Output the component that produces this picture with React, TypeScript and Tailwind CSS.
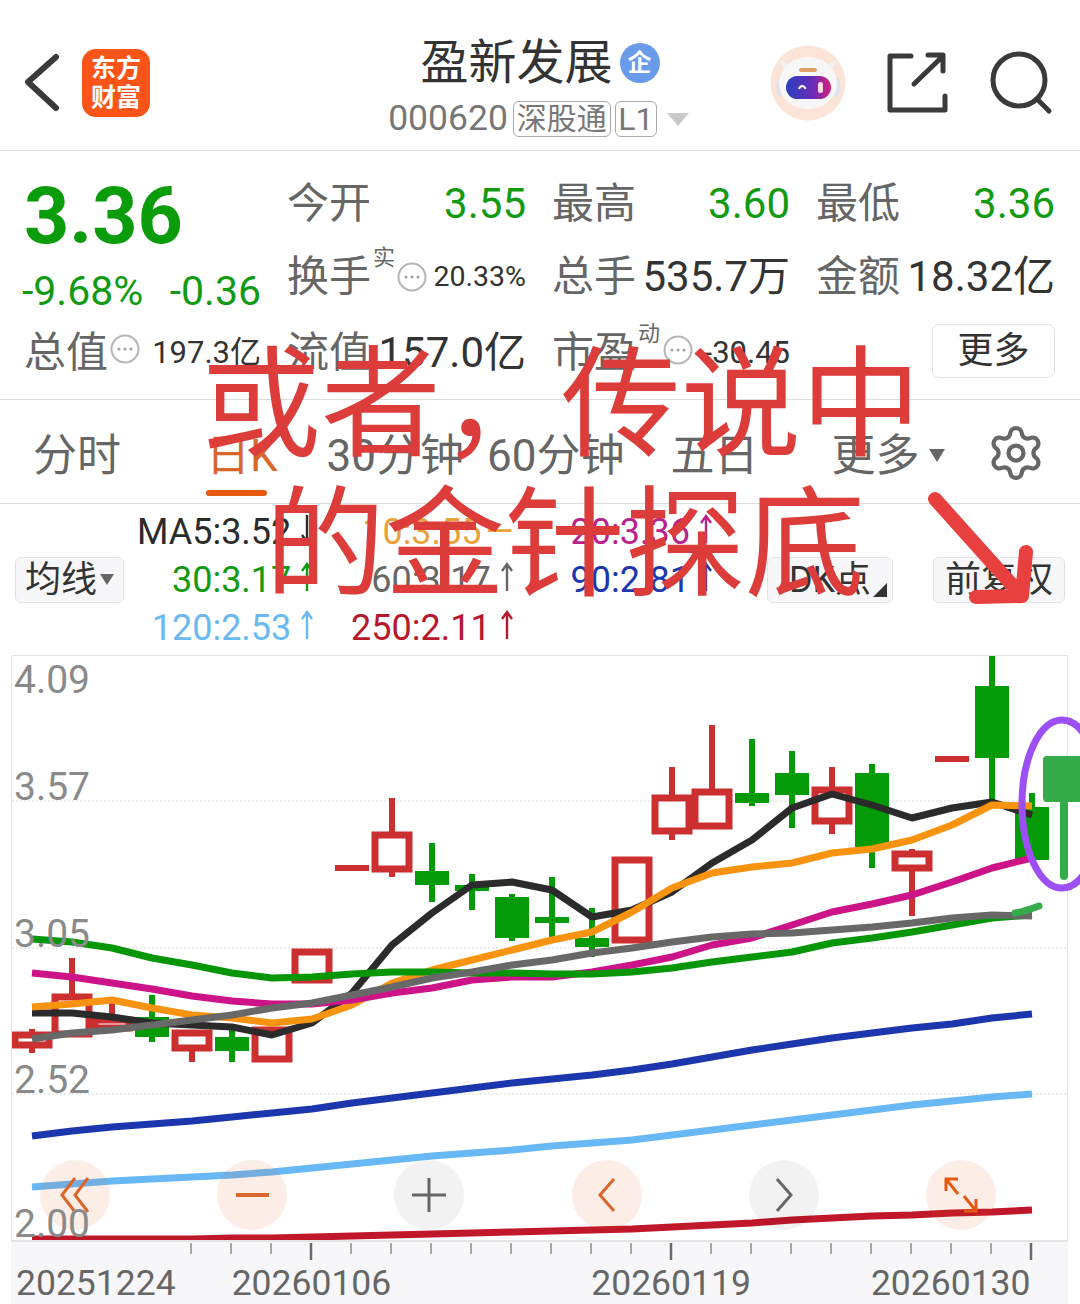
import { Settings } from "lucide-react";

type Candle = { top: number; bottom: number; high: number; low: number; red: boolean };

// one entry per trading day, x = 31 + 40 * index
const candles: Candle[] = [
  { top: 1035, bottom: 1045, high: 1029, low: 1053, red: true },
  { top: 997, bottom: 1034, high: 958, low: 1034, red: true },
  { top: 1020, bottom: 1028, high: 998, low: 1028, red: true },
  { top: 1017, bottom: 1037, high: 995, low: 1042, red: false },
  { top: 1033, bottom: 1048, high: 1030, low: 1062, red: true },
  { top: 1037, bottom: 1051, high: 1030, low: 1062, red: false },
  { top: 1030, bottom: 1059, high: 1027, low: 1059, red: true },
  { top: 952, bottom: 980, high: 952, low: 980, red: true },
  { top: 865, bottom: 871, high: 865, low: 871, red: true },
  { top: 835, bottom: 869, high: 798, low: 877, red: true },
  { top: 871, bottom: 885, high: 843, low: 902, red: false },
  { top: 885, bottom: 890, high: 874, low: 910, red: false },
  { top: 897, bottom: 938, high: 894, low: 941, red: false },
  { top: 917, bottom: 922, high: 877, low: 937, red: false },
  { top: 938, bottom: 947, high: 908, low: 957, red: false },
  { top: 860, bottom: 940, high: 860, low: 940, red: true },
  { top: 798, bottom: 831, high: 767, low: 840, red: true },
  { top: 792, bottom: 826, high: 725, low: 826, red: true },
  { top: 793, bottom: 803, high: 739, low: 806, red: false },
  { top: 773, bottom: 795, high: 751, low: 828, red: false },
  { top: 790, bottom: 821, high: 767, low: 834, red: true },
  { top: 773, bottom: 847, high: 764, low: 868, red: false },
  { top: 854, bottom: 868, high: 849, low: 916, red: true },
  { top: 756, bottom: 762, high: 756, low: 762, red: true },
  { top: 686, bottom: 758, high: 655, low: 800, red: false },
  { top: 807, bottom: 860, high: 793, low: 860, red: false },
];

const toPoints = (ys: number[]) => ys.map((y, i) => `${31 + 40 * i},${y}`).join(" ");

const maLines = [
  {
    color: "#2b2b2b",
    ys: [1013, 1013, 1017, 1023, 1025, 1027, 1035, 1023, 993, 945, 913, 885, 882, 890, 917, 910, 892, 863, 840, 808, 794, 805, 818, 808, 802, 815],
  },
  {
    color: "#f7930f",
    ys: [1007, 1004, 1000, 1008, 1015, 1018, 1023, 1019, 1005, 983, 970, 960, 950, 940, 932, 912, 888, 873, 867, 863, 853, 849, 840, 825, 805, 806],
  },
  {
    color: "#cc1488",
    ys: [973, 977, 983, 989, 996, 1001, 1004, 1004, 1000, 993, 988, 980, 977, 977, 972, 965, 957, 945, 938, 925, 912, 904, 895, 882, 868, 858],
  },
  {
    color: "#079607",
    ys: [939, 942, 948, 958, 965, 973, 978, 977, 974, 972, 972, 973, 973, 974, 974, 972, 968, 962, 957, 952, 943, 938, 932, 925, 918, 915],
  },
  {
    color: "#686868",
    ys: [1039, 1033, 1030, 1025, 1020, 1015, 1008, 1003, 995, 987, 978, 972, 965, 960, 953, 948, 942, 937, 934, 933, 930, 927, 923, 918, 915, 916],
  },
  {
    color: "#1c36ad",
    ys: [1136, 1131, 1127, 1124, 1121, 1117, 1113, 1109, 1103, 1098, 1093, 1088, 1083, 1079, 1075, 1070, 1064, 1057, 1050, 1044, 1038, 1033, 1028, 1024, 1018, 1014],
  },
  {
    color: "#68b8f5",
    ys: [1187, 1184, 1181, 1179, 1177, 1175, 1172, 1168, 1164, 1160, 1156, 1153, 1150, 1146, 1143, 1140, 1135, 1130, 1125, 1120, 1115, 1110, 1105, 1101, 1097, 1094],
  },
  {
    color: "#c0182a",
    ys: [1239, 1239, 1239, 1239, 1239, 1238, 1238, 1237, 1236, 1235, 1234, 1233, 1232, 1231, 1230, 1229, 1227, 1225, 1223, 1220, 1218, 1216, 1215, 1213, 1212, 1210],
  },
];

function Dots() {
  return (
    <svg width="30" height="30" viewBox="0 0 30 30" className="shrink-0">
      <circle cx="15" cy="15" r="13.5" fill="none" stroke="#b5b5b5" strokeWidth="2" />
      <circle cx="9" cy="15" r="1.6" fill="#a5a5a5" />
      <circle cx="15" cy="15" r="1.6" fill="#a5a5a5" />
      <circle cx="21" cy="15" r="1.6" fill="#a5a5a5" />
    </svg>
  );
}

function Arrow({ color, down }: { color: string; down?: boolean }) {
  return (
    <svg width="14" height="30" viewBox="0 0 14 30" className="ml-[9px] shrink-0">
      <path d={down ? "M7 1v27M2 21l5 7 5-7" : "M7 29V2M2 9l5-7 5 7"} fill="none" stroke={color} strokeWidth="2.4" />
    </svg>
  );
}

function Robot() {
  return (
    <svg width="76" height="76" viewBox="0 0 76 76" className="shrink-0">
      <defs>
        <linearGradient id="visor" x1="0" x2="1" y1="0" y2="0">
          <stop offset="0" stopColor="#2a3fc0" />
          <stop offset="0.6" stopColor="#6a2bb8" />
          <stop offset="1" stopColor="#d8207a" />
        </linearGradient>
      </defs>
      <circle cx="38" cy="38" r="37.5" fill="#fde4d8" />
      <path d="M12 16c2 6 5 8 10 10M64 16c-2 6-5 8-10 10" stroke="#f3f1f1" strokeWidth="5" fill="none" />
      <ellipse cx="11" cy="42" rx="5" ry="10" fill="#e2e2e8" />
      <ellipse cx="66" cy="42" rx="5" ry="10" fill="#e2e2e8" />
      <ellipse cx="38" cy="38" rx="29" ry="26" fill="#f8f7f8" />
      <rect x="29" y="23" width="18" height="4" rx="2" fill="#e0a066" />
      <rect x="16" y="31" width="45" height="23" rx="11.5" fill="url(#visor)" />
      <path d="M29 44c1.500-4 5-4 6.500 0" stroke="#ffffff" strokeWidth="2" fill="none" />
      <rect x="48" y="37" width="5" height="11" rx="2.500" fill="#fbdce6" />
    </svg>
  );
}

function Chart() {
  return (
    <svg width="1055" height="584" viewBox="11 656 1055 584" className="block">
      {[801, 948, 1094].map((y) => (
        <line key={y} x1="11" x2="1067" y1={y} y2={y} stroke="#d8d8d8" strokeWidth="1" strokeDasharray="2 2" />
      ))}
      {candles.map((c, i) => {
        const x = 31 + 40 * i;
        const color = c.red ? "#cc2f2f" : "#049a08";
        const flat = c.bottom - c.top <= 6;
        return (
          <g key={i}>
            <line x1={x} x2={x} y1={c.high} y2={c.low} stroke={color} strokeWidth="6" />
            {flat ? (
              <rect x={x - 17} y={c.top} width="34" height="6" fill={color} />
            ) : c.red ? (
              <rect x={x - 17} y={c.top} width="34" height={c.bottom - c.top} fill="#ffffff" stroke={color} strokeWidth="7" />
            ) : (
              <rect x={x - 17} y={c.top} width="34" height={c.bottom - c.top} fill={color} />
            )}
          </g>
        );
      })}
      {maLines.map((l) => (
        <polyline key={l.color} points={toPoints(l.ys)} fill="none" stroke={l.color} strokeWidth="7" strokeLinejoin="bevel" />
      ))}
    </svg>
  );
}

function AxisTicks() {
  const minor = [191, 231, 271, 351, 391, 431, 471, 511, 551, 591, 631, 711, 751, 791, 831, 871, 911, 951, 991];
  return (
    <svg width="1055" height="24" viewBox="11 1240 1055 24" className="block">
      {minor.map((x) => (
        <line key={x} x1={x} x2={x} y1="1241" y2="1252" stroke="#8d8d8d" strokeWidth="1.500" />
      ))}
      {[311, 671, 1031].map((x) => (
        <line key={x} x1={x} x2={x} y1="1241" y2="1258" stroke="#6a6a6a" strokeWidth="2.500" />
      ))}
    </svg>
  );
}

export default function App() {
  return (
    <div className="relative h-[1304px] w-[1080px] overflow-hidden bg-white font-[Roboto,'Noto_Sans_CJK_SC',sans-serif]">
      {/* top bar */}
      <div className="flex h-[151px] items-center border-b-[1.5px] border-[#dcdcdc]">
        <div className="flex w-[320px] items-center pt-[16px]">
          <svg width="40" height="60" viewBox="0 0 40 60" className="ml-[22px]">
            <path d="M34 4 6 29l28 26" fill="none" stroke="#3a3a3a" strokeWidth="6" strokeLinecap="round" strokeLinejoin="round" />
          </svg>
          <div className="ml-[20px] flex h-[68px] w-[68px] flex-col items-center justify-center rounded-[14px] bg-[#fb5418] text-[25px] leading-[29px] font-bold text-white">
            <span>东方</span>
            <span>财富</span>
          </div>
        </div>
        <div className="flex w-[440px] flex-col items-center pt-[20px]">
          <div className="flex h-[62px] items-center gap-[7px]">
            <span className="text-[48px] leading-none text-[#333]">盈新发展</span>
            <span className="flex h-[40px] w-[40px] items-center justify-center rounded-full bg-[#6a9be8] text-[24px] leading-none font-bold text-white">企</span>
          </div>
          <div className="mt-[5px] -ml-[2px] flex h-[40px] items-center">
            <span className="text-[35.5px] leading-none text-[#777]">000620</span>
            <span className="ml-[5px] flex h-[36px] w-[98px] items-center justify-center rounded-[6px] border-[1.5px] border-[#aaa] text-[30px] leading-none text-[#777]">深股通</span>
            <span className="ml-[4px] flex h-[36px] w-[42px] items-center justify-center rounded-[6px] border-[1.5px] border-[#aaa] text-[32px] leading-none text-[#777]">L1</span>
            <svg width="24" height="14" viewBox="0 0 24 14" className="ml-[9px]">
              <path d="M1 1h22L12 14z" fill="#c9c9c9" />
            </svg>
          </div>
        </div>
        <div className="flex w-[320px] items-center pt-[16px] pl-[10px]">
          <Robot />
          <svg width="64" height="64" viewBox="0 0 64 64" className="ml-[39px]">
            <path d="M26 5H5v54h55V45M29 33 58 5M43 4h15v16" fill="none" stroke="#3a3a3a" strokeWidth="5" strokeLinejoin="round" strokeLinecap="round" />
          </svg>
          <svg width="68" height="68" viewBox="0 0 68 68" className="ml-[38px]">
            <circle cx="32" cy="31" r="26" fill="none" stroke="#3a3a3a" strokeWidth="5" />
            <path d="M50 50l12 12" fill="none" stroke="#3a3a3a" strokeWidth="5" strokeLinecap="round" />
          </svg>
        </div>
      </div>

      {/* quote block */}
      <div className="grid h-[249px] grid-cols-[237px_239px_238px_239px] grid-rows-[77px_70px_81px] gap-x-[26px] border-b-[1.5px] border-[#dcdcdc] pt-[14px] pl-[24px] text-[42px] leading-none text-[#666]">
        <div className="flex items-center pt-[26px] text-[79px] font-bold text-[#0a9c0a]">3.36</div>
        <div className="flex items-center justify-between">
          <span>今开</span>
          <span className="text-[#129a12]">3.55</span>
        </div>
        <div className="flex items-center justify-between">
          <span>最高</span>
          <span className="text-[#129a12]">3.60</span>
        </div>
        <div className="flex items-center justify-between">
          <span>最低</span>
          <span className="text-[#129a12]">3.36</span>
        </div>

        <div className="-ml-[2px] flex items-center justify-between pt-[28px] text-[41px] text-[#129a12]">
          <span>-9.68%</span>
          <span>-0.36</span>
        </div>
        <div className="flex items-center">
          <span>换手</span>
          <span className="-mt-[38px] ml-[2px] text-[22px]">实</span>
          <span className="ml-[2px]"><Dots /></span>
          <span className="ml-auto text-[28.500px] text-[#333]">20.33%</span>
        </div>
        <div className="flex items-center justify-between">
          <span>总手</span>
          <span className="text-[#333]">535.7万</span>
        </div>
        <div className="flex items-center justify-between">
          <span>金额</span>
          <span className="text-[#333]">18.32亿</span>
        </div>

        <div className="flex items-center">
          <span>总值</span>
          <span className="-mt-[8px] ml-[2px]"><Dots /></span>
          <span className="ml-auto text-[31px] text-[#333]">197.3亿</span>
        </div>
        <div className="flex items-center justify-between">
          <span>流值</span>
          <span className="text-[#333]">157.0亿</span>
        </div>
        <div className="flex items-center">
          <span>市盈</span>
          <span className="-mt-[38px] ml-[2px] text-[22px]">动</span>
          <span className="-mt-[6px] ml-[3px]"><Dots /></span>
          <span className="ml-auto text-[31px] text-[#333]">-30.45</span>
        </div>
        <div className="flex items-center justify-end">
          <span className="-mt-[4px] flex h-[54px] w-[123px] items-center justify-center rounded-[7px] border-[1.5px] border-[#e2e2e2] text-[36px] text-[#333]">更多</span>
        </div>
      </div>

      {/* period tabs */}
      <div className="flex h-[104px] items-center border-b-[1.5px] border-[#dcdcdc] pt-[8px] text-[44px] leading-none text-[#666]">
        <span className="ml-[33px]">分时</span>
        <span className="relative ml-[85px] text-[#d9662b]">
          日K
          <span className="absolute top-[56px] left-0 h-[6px] w-[61px] rounded-full bg-[#e55a10]" />
        </span>
        <span className="ml-[49px]">30分钟</span>
        <span className="ml-[23px]">60分钟</span>
        <span className="ml-[46px]">五日</span>
        <span className="ml-[73px]">更多</span>
        <svg width="16" height="13" viewBox="0 0 16 13" className="ml-[9px]">
          <path d="M0 0h16L8 13z" fill="#666" />
        </svg>
        <Settings size={60} strokeWidth={1.700} className="-mt-[6px] ml-[41px] text-[#666]" />
      </div>

      {/* moving average legend */}
      <div className="relative flex h-[151px] items-center text-[36px] leading-none">
        <div className="ml-[15px] flex h-[46px] w-[109px] items-center justify-center rounded-[6px] border-[1.5px] border-[#e3e3e6] bg-[#f7f7f9] text-[36px] text-[#333]">
          均线
          <svg width="14" height="11" viewBox="0 0 14 11" className="ml-[3px]">
            <path d="M0 0h14L7 11z" fill="#666" />
          </svg>
        </div>
        <div className="ml-[-9px] grid w-[598px] grid-cols-3 gap-y-[12px]">
          <div className="flex justify-end text-[#2b2b2b]">MA5:3.52<Arrow color="#2b2b2b" down /></div>
          <div className="flex justify-end text-[#e9a23b]">10:3.55<span className="ml-[4px]">—</span></div>
          <div className="flex justify-end text-[#b9228c]">20:3.36<Arrow color="#b9228c" /></div>
          <div className="flex justify-end text-[#129a12]">30:3.17<Arrow color="#129a12" /></div>
          <div className="flex justify-end text-[#666]">60:3.17<Arrow color="#666" /></div>
          <div className="flex justify-end text-[#1c36ad]">90:2.81<Arrow color="#1c36ad" /></div>
          <div className="flex justify-end text-[#6bb9f0]">120:2.53<Arrow color="#6bb9f0" /></div>
          <div className="flex justify-end text-[#b8182b]">250:2.11<Arrow color="#b8182b" /></div>
        </div>
        <div className="relative ml-[54px] flex h-[46px] w-[126px] items-center justify-center rounded-[6px] border-[1.5px] border-[#e3e3e6] bg-[#f7f7f9] text-[36px] text-[#333]">
          DK点
          <svg width="14" height="14" viewBox="0 0 14 14" className="absolute right-[5px] bottom-[5px]">
            <path d="M14 0v14H0z" fill="#333" />
          </svg>
        </div>
        <div className="ml-[40px] flex h-[46px] w-[132px] items-center justify-center rounded-[6px] border-[1.5px] border-[#e3e3e6] bg-[#f7f7f9] text-[36px] text-[#333]">前复权</div>
      </div>

      {/* candlestick chart */}
      <div className="relative ml-[11px] h-[585px] w-[1057px] border-x-[1.5px] border-t-[1.5px] border-[#e4e4e4]">
        <Chart />
        <div className="absolute top-[504px] left-[28px] flex w-[956px] justify-between">
          <span className="flex h-[70px] w-[70px] items-center justify-center rounded-full bg-[#e55a10]/10">
            <svg width="30" height="36" viewBox="0 0 30 36">
              <path d="M15 1 2 18l13 17M28 1 15 18l13 17" fill="none" stroke="#d9662b" strokeWidth="3" />
            </svg>
          </span>
          <span className="flex h-[70px] w-[70px] items-center justify-center rounded-full bg-[#e55a10]/10">
            <span className="h-[4px] w-[33px] bg-[#d9662b]" />
          </span>
          <span className="flex h-[70px] w-[70px] items-center justify-center rounded-full bg-black/5">
            <svg width="36" height="36" viewBox="0 0 36 36">
              <path d="M18 1v34M1 18h34" fill="none" stroke="#666" strokeWidth="3" />
            </svg>
          </span>
          <span className="flex h-[70px] w-[70px] items-center justify-center rounded-full bg-[#e55a10]/10">
            <svg width="18" height="34" viewBox="0 0 18 34">
              <path d="M16 1 2 17l14 16" fill="none" stroke="#d9662b" strokeWidth="3" />
            </svg>
          </span>
          <span className="flex h-[70px] w-[70px] items-center justify-center rounded-full bg-black/5">
            <svg width="18" height="34" viewBox="0 0 18 34">
              <path d="M2 1l14 16L2 33" fill="none" stroke="#666" strokeWidth="3" />
            </svg>
          </span>
          <span className="flex h-[70px] w-[70px] items-center justify-center rounded-full bg-[#e55a10]/10">
            <svg width="36" height="36" viewBox="0 0 36 36">
              <path d="M3 14V2h12M3 2l12 15M33 22v12H21M33 34 21 19" fill="none" stroke="#e55a10" strokeWidth="3" />
            </svg>
          </span>
        </div>
        <span className="absolute top-[2px] left-[2px] text-[39px] leading-[44px] text-[#8a8a8a]">4.09</span>
        <span className="absolute top-[109px] left-[2px] text-[39px] leading-[44px] text-[#8a8a8a]">3.57</span>
        <span className="absolute top-[256px] left-[2px] text-[39px] leading-[44px] text-[#8a8a8a]">3.05</span>
        <span className="absolute top-[402px] left-[2px] text-[39px] leading-[44px] text-[#8a8a8a]">2.52</span>
        <span className="absolute top-[546px] left-[2px] text-[39px] leading-[44px] text-[#8a8a8a]">2.00</span>
      </div>

      {/* date axis */}
      <div className="ml-[11px] h-[64px] w-[1057px] border-t-[2px] border-[#e4e4e4] bg-[#f7f7fa]">
        <AxisTicks />
        <div className="flex text-[35.5px] leading-none text-[#666]">
          <span className="ml-[5px]">20251224</span>
          <span className="ml-[56px]">20260106</span>
          <span className="ml-[200px]">20260119</span>
          <span className="ml-[120px]">20260130</span>
        </div>
      </div>

      {/* hand-written note on top of the page */}
      <div className="absolute top-[346px] left-[201px] text-[120px] leading-[120px] whitespace-nowrap text-[#dc3d3a]">或者，传说中</div>
      <div className="absolute top-[486px] left-[265px] text-[120px] leading-[120px] whitespace-nowrap text-[#dc3d3a]">的金针探底</div>
      <svg width="1080" height="1304" viewBox="0 0 1080 1304" className="absolute top-0 left-0">
        <path d="M935 499 1022 596M1026 552l-4 44-46 1" fill="none" stroke="#e8403f" strokeWidth="14" strokeLinecap="round" strokeLinejoin="round" />
        <ellipse cx="1062" cy="804" rx="40" ry="84" fill="none" stroke="#9b4ff5" strokeWidth="7" />
        <rect x="1043" y="756" width="42" height="46" rx="4" fill="#35ab4a" />
        <path d="M1064 800v76" fill="none" stroke="#35ab4a" strokeWidth="8" strokeLinecap="round" />
        <path d="M1015 913c8-1 16-4 24-7" fill="none" stroke="#35ab4a" strokeWidth="7" strokeLinecap="round" />
      </svg>
    </div>
  );
}
